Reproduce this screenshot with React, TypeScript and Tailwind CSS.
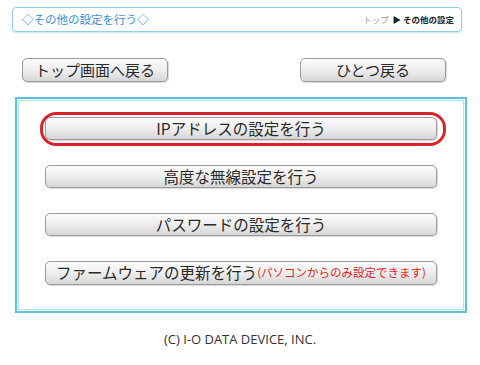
import React from "react";

const jp = { fontFamily: '"Noto Sans CJK JP", "Noto Sans", sans-serif' };

function Btn({ children, className = "" }: { children: React.ReactNode; className?: string }) {
  return (
    <div
      className={
        "flex items-center justify-center rounded-[5px] border border-[#9a9a9a] bg-gradient-to-b from-[#fbfbfb] via-[#eeeeee] to-[#d6d6d6] text-[#2a2a2a] shadow-[1px_1px_1px_rgba(0,0,0,0.15)] " +
        className
      }
    >
      {children}
    </div>
  );
}

export default function App() {
  return (
    <div className="w-[480px] h-[365px] bg-white relative" style={jp}>
      <div className="pt-[7px] pl-[12px]">
        <div className="w-[450px] h-[25px] rounded-[4px] border border-[#8fd0e0] shadow-[0_1px_2px_rgba(120,190,210,0.4)] flex items-center justify-between pl-[9px] pr-[7px]">
          <span className="text-[11.5px] text-[#3b8fd4] leading-none">◇その他の設定を行う◇</span>
          <span className="text-[8.5px] leading-none">
            <span className="text-[#9a9a9a]">トップ</span>
            <span className="text-[#222]">&nbsp;&nbsp;▶ </span>
            <span className="text-[#222] font-bold">その他の設定</span>
          </span>
        </div>
      </div>

      <div className="flex justify-between pl-[22px] pr-[34px] mt-[26px]">
        <Btn className="w-[146px] h-[24px] text-[15px]">トップ画面へ戻る</Btn>
        <Btn className="w-[146px] h-[24px] text-[15px]">ひとつ戻る</Btn>
      </div>

      <div className="ml-[15px] mt-[15px] w-[452px] h-[216px] border-[2px] border-[#5cc2da] p-[1px]">
        <div className="w-full h-full border border-[#b4e3ec] relative flex flex-col pl-[26px] pt-[16px] gap-[25px]">
          <Btn className="w-[392px] h-[23px] text-[15.5px]">IPアドレスの設定を行う</Btn>
          <Btn className="w-[392px] h-[23px] text-[15.5px]">高度な無線設定を行う</Btn>
          <Btn className="w-[392px] h-[23px] text-[15.5px]">パスワードの設定を行う</Btn>
          <Btn className="w-[392px] h-[24px] text-[15.5px]">
            ファームウェアの更新を行う
            <span className="text-[11.5px] text-[#e02424]">(パソコンからのみ設定できます)</span>
          </Btn>
          <div className="absolute left-[21px] top-[11px] w-[406px] h-[34px] rounded-[16px] border-[3.5px] border-[#d8232a]" />
        </div>
      </div>

      <div
        className="text-center text-[13px] text-[#333] mt-[17px]"
        style={{ fontFamily: '"Open Sans", sans-serif' }}
      >
        (C) I-O DATA DEVICE, INC.
      </div>
    </div>
  );
}
